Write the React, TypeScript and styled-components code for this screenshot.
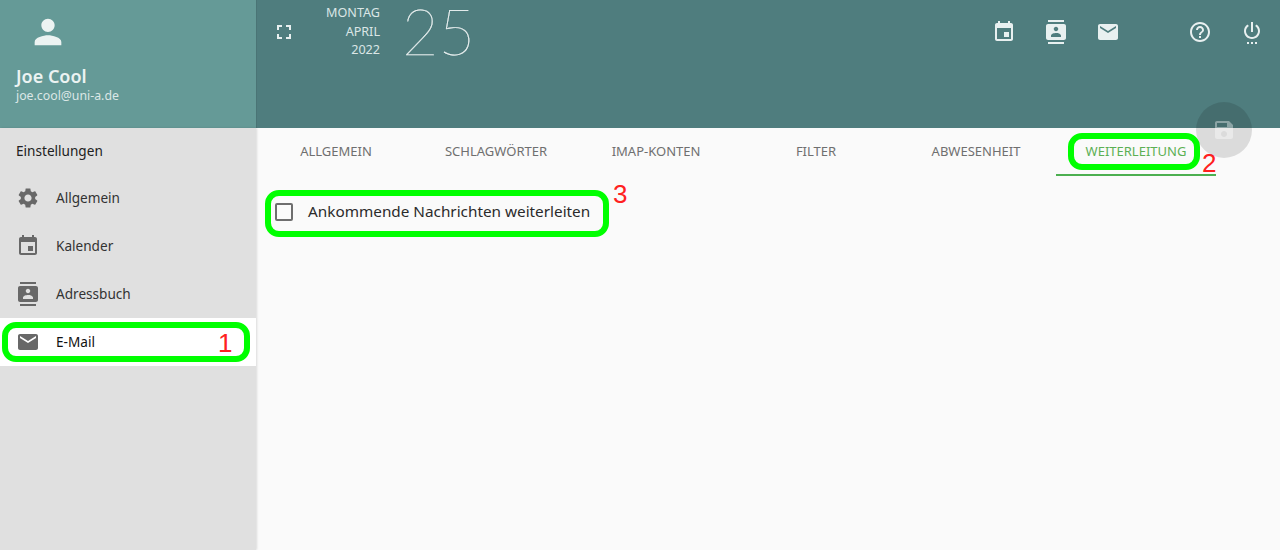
import React from "react";
import styled, { createGlobalStyle } from "styled-components";

const FONT = `"Noto Sans", "Open Sans", sans-serif`;

const PATHS = {
    person: "M12 12c2.21 0 4-1.79 4-4s-1.79-4-4-4-4 1.79-4 4 1.79 4 4 4zm0 2c-2.67 0-8 1.34-8 4v2h16v-2c0-2.66-5.33-4-8-4z",
    fullscreen: "M7 14H5v5h5v-2H7v-3zm-2-4h2V7h3V5H5v5zm12 7h-3v2h5v-5h-2v3zM14 5v2h3v3h2V5h-5z",
    event: "M17 12h-5v5h5v-5zM16 1v2H8V1H6v2H5c-1.11 0-1.99.9-1.99 2L3 19c0 1.1.89 2 2 2h14c1.1 0 2-.9 2-2V5c0-1.1-.9-2-2-2h-1V1h-2zm3 18H5V8h14v11z",
    contacts: "M20 0H4v2h16V0zM4 24h16v-2H4v2zM20 4H4c-1.1 0-2 .9-2 2v12c0 1.1.9 2 2 2h16c1.1 0 2-.9 2-2V6c0-1.1-.9-2-2-2zm-8 2.75c1.24 0 2.25 1.01 2.25 2.25s-1.01 2.25-2.25 2.25S9.75 10.24 9.75 9 10.76 6.75 12 6.75zM17 17H7v-1.5c0-1.67 3.33-2.5 5-2.5s5 .83 5 2.5V17z",
    email: "M20 4H4c-1.1 0-1.99.9-1.99 2L2 18c0 1.1.9 2 2 2h16c1.1 0 2-.9 2-2V6c0-1.1-.9-2-2-2zm0 4l-8 5-8-5V6l8 5 8-5v2z",
    help: "M11 18h2v-2h-2v2zm1-16C6.48 2 2 6.48 2 12s4.48 10 10 10 10-4.48 10-10S17.52 2 12 2zm0 18c-4.41 0-8-3.59-8-8s3.59-8 8-8 8 3.59 8 8-3.59 8-8 8zm0-14c-2.21 0-4 1.79-4 4h2c0-1.1.9-2 2-2s2 .9 2 2c0 2-3 1.75-3 5h2c0-2.25 3-2.5 3-5 0-2.21-1.79-4-4-4z",
    power: "M7 24h2v-2H7v2zm4 0h2v-2h-2v2zm2-22h-2v10h2V2zm3.56 2.44l-1.45 1.45C16.84 6.94 18 8.83 18 11c0 3.31-2.69 6-6 6s-6-2.69-6-6c0-2.17 1.16-4.06 2.88-5.12L7.44 4.44C5.36 5.88 4 8.28 4 11c0 4.42 3.58 8 8 8s8-3.58 8-8c0-2.72-1.36-5.12-3.44-6.56zM15 24h2v-2h-2v2z",
    settings: "M19.14 12.94c.04-.3.06-.61.06-.94 0-.32-.02-.64-.07-.94l2.03-1.58c.18-.14.23-.41.12-.61l-1.92-3.32c-.12-.22-.37-.29-.59-.22l-2.39.96c-.5-.38-1.03-.7-1.62-.94l-.36-2.54c-.04-.24-.24-.41-.48-.41h-3.84c-.24 0-.43.17-.47.41l-.36 2.54c-.59.24-1.13.57-1.62.94l-2.39-.96c-.22-.08-.47 0-.59.22L2.74 8.87c-.12.21-.08.47.12.61l2.03 1.58c-.05.3-.09.63-.09.94s.02.64.07.94l-2.03 1.58c-.18.14-.23.41-.12.61l1.92 3.32c.12.22.37.29.59.22l2.39-.96c.5.38 1.03.7 1.62.94l.36 2.54c.05.24.24.41.48.41h3.84c.24 0 .44-.17.47-.41l.36-2.54c.59-.24 1.13-.56 1.62-.94l2.39.96c.22.08.47 0 .59-.22l1.92-3.32c.12-.22.07-.47-.12-.61l-2.01-1.58zM12 15.6c-1.98 0-3.6-1.62-3.6-3.6s1.62-3.6 3.6-3.6 3.6 1.62 3.6 3.6-1.62 3.6-3.6 3.6z",
    save: "M17 3H5c-1.11 0-2 .9-2 2v14c0 1.1.89 2 2 2h14c1.1 0 2-.9 2-2V7l-4-4zm-5 16c-1.66 0-3-1.34-3-3s1.34-3 3-3 3 1.34 3 3-1.34 3-3 3zm3-10H5V5h10v4z",
};

type IconName = keyof typeof PATHS;

const GlobalStyle = createGlobalStyle`
    html, body {
        margin: 0;
        padding: 0;
        height: 100%;
        overflow: hidden;
        background: #fafafa;
        font-family: ${FONT};
    }
`;

const Page = styled.div`
    position: relative;
    display: grid;
    grid-template-columns: 256px 1fr;
    grid-template-rows: 128px 1fr;
    width: 1280px;
    height: 550px;
    overflow: hidden;
`;

const Profile = styled.div`
    display: flex;
    flex-direction: column;
    padding: 12px 16px 0;
    background: #659a97;
    color: #ecf3f2;
`;

const Avatar = styled.div`
    display: flex;
    width: 64px;
    justify-content: center;
    margin-bottom: 11px;
`;

const Name = styled.div`
    font-size: 18px;
    font-weight: 600;
    line-height: 26px;
`;

const Mail = styled.div`
    font-size: 12.3px;
    line-height: 14px;
    color: #dbe7e6;
`;

const TopBar = styled.header`
    display: flex;
    align-items: flex-start;
    padding: 0 16px 0 15px;
    background: #4f7d7e;
    color: #e8f0f0;
    border-left: 1px solid #4a7475;
`;

const IconButton = styled.div<{ $gap?: number }>`
    display: flex;
    margin-top: 20px;
    margin-left: ${(p) => p.$gap ?? 0}px;
`;

const DateLines = styled.div`
    width: 72px;
    margin-left: 12px;
    padding-top: 4px;
    text-align: right;
    font-size: 12.6px;
    line-height: 18.5px;
    color: #dbe6e6;
`;

const DayNumber = styled.div`
    margin-left: 22px;
    font-family: "Lato", sans-serif;
    font-weight: 100;
    font-size: 63px;
    line-height: 62px;
    color: #f2f6f6;
    -webkit-text-stroke: 0.25px #f2f6f6;
`;

const Spacer = styled.div`
    flex: 1;
`;

const Sidebar = styled.nav`
    position: relative;
    background: #e0e0e0;
    box-shadow: 1px 0 2px rgba(0, 0, 0, 0.12);
`;

const SidebarTitle = styled.div`
    height: 46px;
    padding-left: 16px;
    font-size: 13.6px;
    line-height: 46px;
    color: #212121;
`;

const NavItem = styled.div<{ $active?: boolean }>`
    position: relative;
    display: flex;
    align-items: center;
    gap: 16px;
    height: 48px;
    padding-left: 16px;
    font-size: 13.6px;
    background: ${(p) => (p.$active ? "#fff" : "transparent")};
    color: ${(p) => (p.$active ? "#111" : "#333")};
`;

const NavLabel = styled.span`
    margin-top: -2px;
`;

const Main = styled.main`
    background: #fafafa;
`;

const Tabs = styled.div`
    display: grid;
    grid-template-columns: repeat(6, 160px);
    height: 48px;
`;

const Tab = styled.div<{ $active?: boolean }>`
    position: relative;
    display: flex;
    align-items: center;
    justify-content: center;
    font-size: 13px;
    color: ${(p) => (p.$active ? "#5cb054" : "#6f6f6f")};
    border-bottom: 2px solid ${(p) => (p.$active ? "#4caf50" : "transparent")};
`;

const CheckRow = styled.label`
    position: relative;
    display: inline-flex;
    align-items: center;
    gap: 15px;
    margin: 12px 0 0 19px;
    height: 48px;
    font-size: 15.3px;
    color: #2b2b2b;
`;

const CheckLabel = styled.span`
    margin-top: -2px;
`;

const CheckBox = styled.span`
    width: 18px;
    height: 18px;
    box-sizing: border-box;
    border: 2px solid #6e6e6e;
    border-radius: 2px;
`;

const SaveFab = styled.div`
    position: absolute;
    left: 1196px;
    top: 102px;
    display: flex;
    align-items: center;
    justify-content: center;
    width: 56px;
    height: 56px;
    border-radius: 50%;
    background: rgba(0, 0, 0, 0.12);
    color: rgba(255, 255, 255, 0.38);
`;

const Ring = styled.span<{ $inset: string }>`
    position: absolute;
    inset: ${(p) => p.$inset};
    border: 6px solid #00ff00;
    border-radius: 14px;
    pointer-events: none;
`;

const Marker = styled.span<{ $left: number; $top: number }>`
    position: absolute;
    left: ${(p) => p.$left}px;
    top: ${(p) => p.$top}px;
    font-family: "Liberation Sans", Arial, sans-serif;
    font-size: 26px;
    line-height: 30px;
    color: #ff2020;
`;

const Svg = styled.svg`
    display: block;
    fill: currentColor;
    flex: none;
`;

const NavIcon = styled.span`
    display: flex;
    color: #686868;
`;

function Icon({ name, size = 24 }: { name: IconName; size?: number }) {
    return (
        <Svg width={size} height={size} viewBox="0 0 24 24">
            <path d={PATHS[name]} />
        </Svg>
    );
}

const navItems: { label: string; icon: IconName }[] = [
    { label: "Allgemein", icon: "settings" },
    { label: "Kalender", icon: "event" },
    { label: "Adressbuch", icon: "contacts" },
];

const tabs = ["ALLGEMEIN", "SCHLAGWÖRTER", "IMAP-KONTEN", "FILTER", "ABWESENHEIT"];

export default function App() {
    return (
        <Page>
            <GlobalStyle />
            <Profile>
                <Avatar>
                    <Icon name="person" size={40} />
                </Avatar>
                <Name>Joe Cool</Name>
                <Mail>joe.cool@uni-a.de</Mail>
            </Profile>
            <TopBar>
                <IconButton>
                    <Icon name="fullscreen" />
                </IconButton>
                <DateLines>
                    <div>MONTAG</div>
                    <div>APRIL</div>
                    <div>2022</div>
                </DateLines>
                <DayNumber>25</DayNumber>
                <Spacer />
                <IconButton>
                    <Icon name="event" />
                </IconButton>
                <IconButton $gap={28}>
                    <Icon name="contacts" />
                </IconButton>
                <IconButton $gap={28}>
                    <Icon name="email" />
                </IconButton>
                <IconButton $gap={68}>
                    <Icon name="help" />
                </IconButton>
                <IconButton $gap={28}>
                    <Icon name="power" />
                </IconButton>
            </TopBar>
            <Sidebar>
                <SidebarTitle>Einstellungen</SidebarTitle>
                {navItems.map((item) => (
                    <NavItem key={item.label}>
                        <NavIcon>
                            <Icon name={item.icon} />
                        </NavIcon>
                        <NavLabel>{item.label}</NavLabel>
                    </NavItem>
                ))}
                <NavItem $active>
                    <NavIcon>
                        <Icon name="email" />
                    </NavIcon>
                    <NavLabel>E-Mail</NavLabel>
                    <Ring $inset="4px 6px 4px 2px" />
                    <Marker $left={218} $top={10}>1</Marker>
                </NavItem>
            </Sidebar>
            <Main>
                <Tabs>
                    {tabs.map((tab) => (
                        <Tab key={tab}>{tab}</Tab>
                    ))}
                    <Tab $active>
                        WEITERLEITUNG
                        <Ring $inset="5px 16px 4px 12px" />
                        <Marker $left={146} $top={20}>2</Marker>
                    </Tab>
                </Tabs>
                <CheckRow>
                    <CheckBox />
                    <CheckLabel>Ankommende Nachrichten weiterleiten</CheckLabel>
                    <Ring $inset="2px -19px -1px -10px" />
                    <Marker $left={338} $top={-9}>3</Marker>
                </CheckRow>
            </Main>
            <SaveFab>
                <Icon name="save" />
            </SaveFab>
        </Page>
    );
}
